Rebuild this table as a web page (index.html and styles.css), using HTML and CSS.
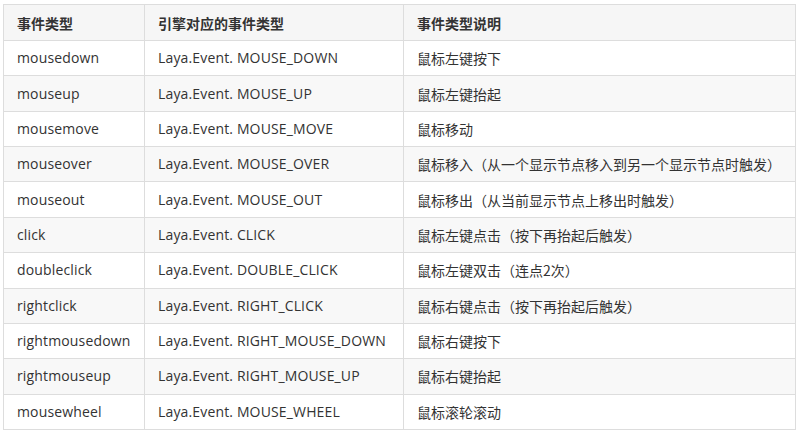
FILE: index.html
```html
<!DOCTYPE html>
<html lang="zh">
<head>
<meta charset="utf-8">
<link rel="stylesheet" href="styles.css">
</head>
<body>
<table class="events">
<colgroup><col class="c1"><col class="c2"><col class="c3"></colgroup>
<thead>
<tr><th>事件类型</th><th>引擎对应的事件类型</th><th>事件类型说明</th></tr>
</thead>
<tbody>
<tr><td>mousedown</td><td>Laya.Event. MOUSE_DOWN</td><td>鼠标左键按下</td></tr>
<tr><td>mouseup</td><td>Laya.Event. MOUSE_UP</td><td>鼠标左键抬起</td></tr>
<tr><td>mousemove</td><td>Laya.Event. MOUSE_MOVE</td><td>鼠标移动</td></tr>
<tr><td>mouseover</td><td>Laya.Event. MOUSE_OVER</td><td>鼠标移入（从一个显示节点移入到另一个显示节点时触发）</td></tr>
<tr><td>mouseout</td><td>Laya.Event. MOUSE_OUT</td><td>鼠标移出（从当前显示节点上移出时触发）</td></tr>
<tr><td>click</td><td>Laya.Event. CLICK</td><td>鼠标左键点击（按下再抬起后触发）</td></tr>
<tr><td>doubleclick</td><td>Laya.Event. DOUBLE_CLICK</td><td>鼠标左键双击（连点2次）</td></tr>
<tr><td>rightclick</td><td>Laya.Event. RIGHT_CLICK</td><td>鼠标右键点击（按下再抬起后触发）</td></tr>
<tr><td>rightmousedown</td><td>Laya.Event. RIGHT_MOUSE_DOWN</td><td>鼠标右键按下</td></tr>
<tr><td>rightmouseup</td><td>Laya.Event. RIGHT_MOUSE_UP</td><td>鼠标右键抬起</td></tr>
<tr><td>mousewheel</td><td>Laya.Event. MOUSE_WHEEL</td><td>鼠标滚轮滚动</td></tr>
</tbody>
</table>
</body>
</html>
```
FILE: styles.css
```css
html, body {
  margin: 0;
  padding: 0;
  background: #fff;
}
body {
  padding: 4px 0 0 3px;
  font-family: "Open Sans", "Noto Sans CJK SC", sans-serif;
  font-size: 14px;
  color: #333;
}
.events {
  border-collapse: collapse;
  table-layout: fixed;
  width: 792px;
}
.c1 { width: 141px; }
.c2 { width: 259px; }
.c3 { width: 392px; }
.events th, .events td {
  border: 1px solid #dddddd;
  text-align: left;
  padding: 0 13px;
  white-space: nowrap;
  line-height: 20px;
}
.events th {
  height: 35px;
  background: #f6f6f6;
  font-weight: bold;
  font-family: "Noto Sans CJK SC", sans-serif;
  font-size: 14px;
}
.events td {
  height: 34.36px;
  letter-spacing: 0.15px;
}
.events tbody tr:nth-child(even) td {
  background: #f8f8f8;
}
.events td:nth-child(3) {
  font-family: "Noto Sans CJK SC", sans-serif;
  font-size: 14px;
  letter-spacing: 0;
}
```
